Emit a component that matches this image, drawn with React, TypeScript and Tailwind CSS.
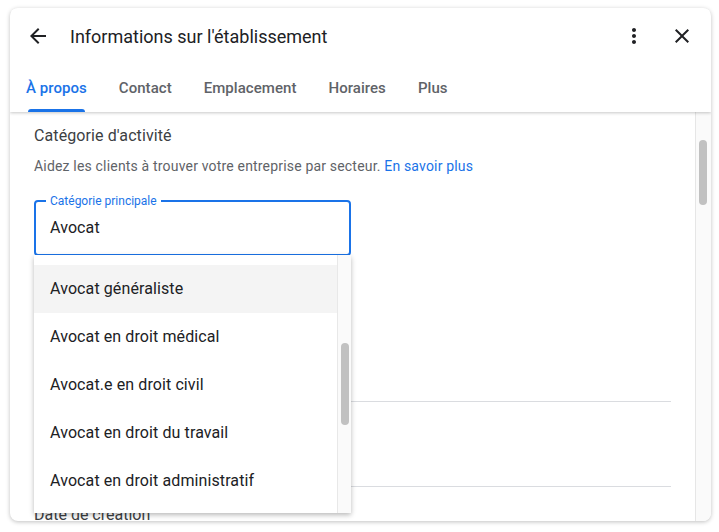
import React from 'react';

const tabs = ['À propos', 'Contact', 'Emplacement', 'Horaires', 'Plus'];

const options = [
  'Avocat généraliste',
  'Avocat en droit médical',
  'Avocat.e en droit civil',
  'Avocat en droit du travail',
  'Avocat en droit administratif',
];

const Icon: React.FC<{ d: string; className?: string }> = ({ d, className = '' }) => (
  <svg viewBox="0 0 24 24" width="24" height="24" className={className} fill="currentColor">
    <path d={d} />
  </svg>
);

export default function App() {
  return (
    <div className="w-[719px] h-[532px] bg-white font-['Roboto',sans-serif] overflow-hidden pt-2 pl-[10px]">
      <div className="relative w-[701px] h-[513px] bg-white rounded-lg shadow-[0_1px_4px_rgba(0,0,0,0.25)] flex flex-col overflow-hidden">
        {/* header */}
        <div className="relative z-10 bg-white shadow-[0_1px_3px_rgba(0,0,0,0.22)]">
          <div className="h-14 flex items-center pl-4 pr-[17px]">
            <Icon className="text-[#202124]" d="M20 11H7.83l5.59-5.59L12 4l-8 8 8 8 1.41-1.41L7.83 13H20v-2z" />
            <h1 className="ml-5 text-[18px] text-[#202124]">Informations sur l'établissement</h1>
            <div className="ml-auto flex items-center gap-6">
              <Icon className="text-[#202124]" d="M12 8c1.1 0 2-.9 2-2s-.9-2-2-2-2 .9-2 2 .9 2 2 2zm0 2c-1.1 0-2 .9-2 2s.9 2 2 2 2-.9 2-2-.9-2-2-2zm0 6c-1.1 0-2 .9-2 2s.9 2 2 2 2-.9 2-2-.9-2-2-2z" />
              <Icon className="text-[#202124]" d="M19 6.41L17.59 5 12 10.59 6.41 5 5 6.41 10.59 12 5 17.59 6.41 19 12 13.41 17.59 19 19 17.59 13.41 12z" />
            </div>
          </div>
          <div className="h-12 flex">
            {tabs.map((t, i) => (
              <div key={t} className="relative px-4 flex items-center">
                <span className={`text-[15px] font-medium tracking-[0.05px] ${i === 0 ? 'text-[#1a73e8]' : 'text-[#5f6368]'}`}>{t}</span>
                {i === 0 && <div className="absolute bottom-0 left-[18px] right-[18px] h-[3px] rounded-t-[3px] bg-[#1a73e8]" />}
              </div>
            ))}
          </div>
        </div>

        {/* body */}
        <div className="flex flex-1 min-h-0">
          <div className="relative flex-1 overflow-hidden px-6 pt-3">
            <h2 className="text-[16px] leading-6 text-[#3c4043] tracking-[0.1px]">Catégorie d'activité</h2>
            <p className="mt-2 text-[14px] leading-5 text-[#5f6368] tracking-[0.18px]">
              Aidez les clients à trouver votre entreprise par secteur. <span className="text-[#1a73e8]">En savoir plus</span>
            </p>
            <div className="relative mt-6 w-[317px] h-14 border-2 border-[#1a73e8] rounded flex items-center pl-[14px]">
              <span className="absolute -top-[9px] left-[10px] bg-white px-[4px] text-[12px] leading-4 text-[#1a73e8]">Catégorie principale</span>
              <span className="text-[16px] text-[#202124] tracking-[0.1px]">Avocat</span>
            </div>
            <div className="h-[145px]" />
            <div className="h-px bg-[#dadce0]" />
            <div className="h-[84px]" />
            <div className="h-px bg-[#dadce0]" />
            <p className="mt-4 text-[16px] leading-6 text-[#3c4043]">Date de création</p>

            {/* dropdown menu */}
            <div className="absolute left-6 top-[143px] w-[317px] h-[258px] bg-white shadow-[0_2px_5px_rgba(0,0,0,0.28)] flex">
              <div className="flex-1 pt-[10px]">
                {options.map((o, i) => (
                  <div key={o} className={`h-12 flex items-center pl-4 text-[16px] tracking-[0.1px] text-[#202124] ${i === 0 ? 'bg-[#f4f4f4]' : ''}`}>
                    {o}
                  </div>
                ))}
              </div>
              <div className="w-[14px] bg-[#fafafa] border-l border-[#e8e8e8] relative">
                <div className="absolute left-[3px] top-[88px] w-2 h-[82px] rounded bg-[#c1c1c1]" />
              </div>
            </div>
          </div>
          <div className="relative w-4 bg-[#fafafa] border-l border-[#e6e6e6]">
            <div className="absolute left-[3px] top-[28px] w-2 h-[65px] rounded bg-[#c1c1c1]" />
          </div>
        </div>
      </div>
    </div>
  );
}
